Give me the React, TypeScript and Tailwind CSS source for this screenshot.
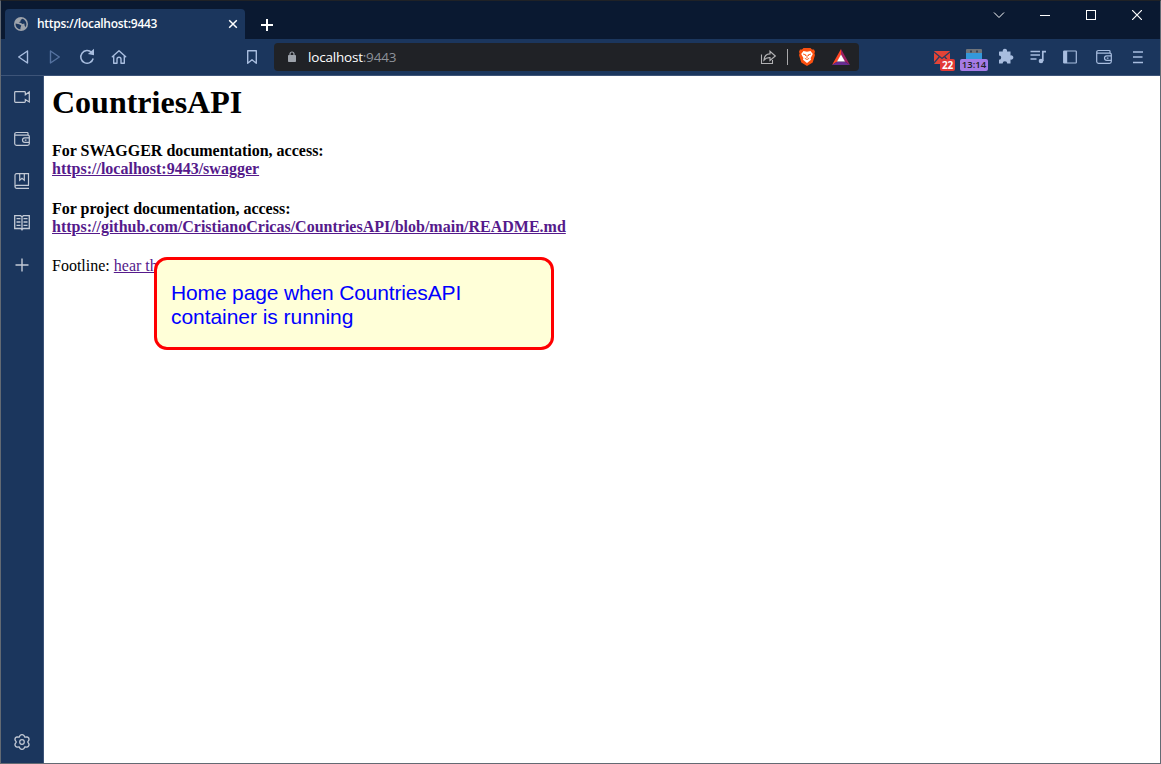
import React from "react";

type IconProps = { children: React.ReactNode; className?: string };

/* 20px icon drawn one unit per pixel, centred in its slot */
function Icon({ children, className = "" }: IconProps) {
  return (
    <svg
      width="20"
      height="20"
      viewBox="0 0 20 20"
      fill="none"
      stroke="currentColor"
      strokeWidth="1.4"
      className={`block shrink-0 ${className}`}
    >
      {children}
    </svg>
  );
}

function Slot({ children, className = "w-8" }: IconProps) {
  return (
    <div className={`relative flex h-9 shrink-0 items-center justify-center ${className}`}>
      {children}
    </div>
  );
}

function SideSlot({ children }: { children: React.ReactNode }) {
  return <div className="flex h-[42px] w-[42px] items-center justify-center">{children}</div>;
}

function TabStrip() {
  return (
    <div className="flex h-[38px] shrink-0 bg-[#0a1931]">
      <div className="ml-1 mt-2 flex h-[30px] w-[240px] items-center rounded-t-[4px] bg-[#1b365d] text-white">
        <svg width="14" height="14" viewBox="0 0 14 14" className="ml-[9px] shrink-0">
          <circle cx="7" cy="7" r="7" fill="#9da3ab" />
          <path
            d="M1.6 6.6 5.2 7.2 7.3 8.6 6.6 10.3 6.3 12.4C3.3 12 1.3 9.700 1.600 6.600ZM8.300 1.700 6.700 3 6.500 4.600 4.700 5.300 6.900 6.100 8.500 7.100 10.300 6.600 10.600 8.500 11.500 10.200C13.400 7.300 12.400 3 8.300 1.700Z"
            fill="#1b365d"
          />
        </svg>
        <span className="ml-[9px] w-[191px] whitespace-nowrap font-['Open_Sans',sans-serif] text-[12px] font-semibold leading-4 tracking-[-0.28px]">
          https://localhost:9443
        </span>
        <svg width="10" height="10" viewBox="0 0 10 10" className="shrink-0" stroke="#fff" strokeWidth="1.5">
          <path d="M1.200 1.200 8.800 8.800M8.800 1.200 1.200 8.800" />
        </svg>
      </div>
      <svg width="12" height="12" viewBox="0 0 12 12" className="ml-4 mt-[9px] shrink-0 self-center">
        <path d="M0 6h12M6 0v12" stroke="#fff" strokeWidth="2" />
      </svg>
      <div className="ml-auto flex h-[28px] items-center text-white">
        <div className="flex w-[46px] justify-center">
          <svg width="12" height="8" viewBox="0 0 12 8" fill="none" stroke="currentColor">
            <path d="M1 1.500 6 6.500 11 1.500" />
          </svg>
        </div>
        <div className="flex w-[46px] justify-center">
          <div className="h-px w-[10px] bg-white" />
        </div>
        <div className="flex w-[46px] justify-center">
          <div className="h-[10px] w-[10px] border border-white" />
        </div>
        <div className="flex w-[46px] justify-center">
          <svg width="10" height="10" viewBox="0 0 10 10" stroke="currentColor" strokeWidth="1.2">
            <path d="M0 0 10 10M10 0 0 10" />
          </svg>
        </div>
      </div>
    </div>
  );
}

function WalletIcon() {
  return (
    <Icon>
      <path
        d="M16 5.700V4.300A0.800 0.800 0 0 0 15.200 3.500H4.500A1.800 1.800 0 0 0 2.700 5.300V14.700A1.800 1.800 0 0 0 4.500 16.300H15.500A1.800 1.800 0 0 0 17.300 14.500V7.500A1.400 1.400 0 0 0 15.900 6.100H4A1.300 1.300 0 0 1 2.700 5"
        strokeWidth="1.200"
      />
      <path d="M17.300 8.800H12.800A2.300 2.300 0 0 0 12.800 13.400H17.300M12.800 11.100H14.500" strokeWidth="1.200" />
    </Icon>
  );
}

function AddressBar() {
  return (
    <div className="ml-[6px] flex h-7 w-[585px] shrink-0 items-center rounded-[4px] bg-[#202226]">
      <svg width="8" height="12" viewBox="0 0 8 12" className="ml-[14px] shrink-0">
        <path d="M2 5V3A2 2 0 0 1 6 3V5" fill="none" stroke="#9da3ab" strokeWidth="1.200" />
        <rect x="0" y="4" width="8" height="7" rx="0.800" fill="#9da3ab" />
      </svg>
      <span className="ml-3 whitespace-nowrap font-['Open_Sans',sans-serif] text-[13.500px] leading-5 tracking-[-0.2px] text-[#8d929a]">
        <span className="text-white">localhost</span>:9443
      </span>
      <div className="ml-auto flex shrink-0 items-center">
        <Icon className="mr-[9px] text-[#b1b1b3]">
          <path d="M3.500 7.500V16.500H14.500V13" strokeWidth="1.100" />
          <path
            d="M6 13C6.300 8.800 8.500 6.800 12 6.800V4.300L17.300 9 12 13.500V10.700C9.500 10.500 7.500 11.200 6 13Z"
            strokeWidth="1.200"
          />
        </Icon>
        <div className="h-4 w-px bg-[#a8a8aa]" />
        <svg width="18" height="20" viewBox="0 0 18 20" className="ml-[10px] shrink-0">
          <path
            d="M5.500 1H12.500L14 2.500 16 2.400 17 4.800 16.400 6.500 17 8 14.700 15.500 9 19 3.300 15.500 1 8 1.600 6.500 1 4.800 2 2.400 4 2.500Z"
            fill="#fb5010"
          />
          <path
            d="M5.500 4 9 4.700 12.500 4 14.800 7 12.600 11 13 12.700 9 16 5 12.700 5.400 11 3.200 7Z"
            fill="#fff"
          />
          <path
            d="M5 7 7.700 7.800 7.300 9M13 7 10.300 7.800 10.700 9M9 8V11M6.800 11.300 9 12.500 11.200 11.300"
            fill="none"
            stroke="#fb5010"
            strokeWidth="0.900"
          />
        </svg>
        <svg width="18" height="16" viewBox="0 0 18 16" className="ml-4 mr-[9px] shrink-0">
          <path d="M9 0 0 16 5.300 12.500 9 6Z" fill="#ff4724" />
          <path d="M9 0 18 16 12.700 12.500 9 6Z" fill="#9e1f63" />
          <path d="M0 16H18L12.700 12.500H5.300Z" fill="#662d91" />
          <path d="M9 5.500 13 12.500H5Z" fill="#fff" />
        </svg>
      </div>
    </div>
  );
}

function Toolbar() {
  return (
    <div className="flex h-9 shrink-0 items-center bg-[#1b365d] pl-[6px] text-[#a8bddf]">
      <Slot>
        <Icon>
          <path d="M5.700 10 14.500 4V16Z" strokeLinejoin="round" />
        </Icon>
      </Slot>
      <Slot>
        <Icon className="text-[#5572a0]">
          <path d="M14.300 10 5.500 4V16Z" strokeLinejoin="round" />
        </Icon>
      </Slot>
      <Slot>
        <Icon>
          <path d="M14.700 5.600A6.300 6.300 0 1 0 16.200 11.500" strokeWidth="1.500" />
          <path d="M12.500 6.500 16.300 3.300V7.300Z" fill="currentColor" />
        </Icon>
      </Slot>
      <Slot>
        <Icon>
          <path
            d="M3.300 9.800 10 3.700 16.700 9.800M4.700 9V16.300H8V12.300A2 2 0 0 1 12 12.300V16.300H15.300V9"
            strokeLinejoin="round"
            strokeLinecap="round"
          />
        </Icon>
      </Slot>
      <Slot className="ml-[101px] w-8">
        <Icon>
          <path d="M5.700 3.700H14.300V16.300L10 12.800 5.700 16.300Z" strokeLinejoin="round" />
        </Icon>
      </Slot>
      <AddressBar />
      <div className="ml-[67px] flex items-center">
        <Slot>
          <svg width="16" height="13" viewBox="0 0 16 13" className="block">
            <rect width="16" height="13" rx="1" fill="#e34437" />
            <path d="M0 1 8 7.500 16 1M0 12 5.500 5.500M16 12 10.500 5.500" fill="none" stroke="#283d61" strokeWidth="1.300" />
          </svg>
          <span className="absolute left-[14px] top-5 flex h-3 w-[15px] items-center justify-center rounded-[2px] bg-[#e23a36] font-['Open_Sans',sans-serif] text-[10px] font-bold leading-3 tracking-[-0.3px] text-white">
            22
          </span>
        </Slot>
        <Slot>
          <svg width="16" height="16" viewBox="0 0 16 16" className="block">
            <rect width="16" height="5" rx="1" fill="#70747a" />
            <path d="M4 1.500h2v2h-2zM10 1.500h2v2h-2z" fill="#3b4354" />
            <rect width="16" height="9" y="4" fill="#3498db" />
          </svg>
          <span className="absolute left-[2px] top-5 flex h-3 w-7 items-center justify-center rounded-[2px] bg-[#a57be6] font-['Open_Sans',sans-serif] text-[9.500px] font-semibold leading-3 text-[#202124]">
            13:14
          </span>
        </Slot>
        <Slot>
          <Icon>
            <path
              d="M3.500 4.500H6.800A2.200 2.200 0 1 1 11 4.500H14.500V8.400A2.200 2.200 0 1 1 14.500 12.600V16.500H11.200A2.300 2.300 0 0 0 6.600 16.500H3V12.800A2.200 2.200 0 0 0 3 8.400V5A0.500 0.500 0 0 1 3.500 4.500Z"
              fill="currentColor"
              stroke="none"
            />
          </Icon>
        </Slot>
        <Slot>
          <Icon>
            <path d="M2.500 4.500H12M2.500 8H12M2.500 12H8.500" strokeWidth="1.500" />
            <path d="M18 4.700H14.800V14" strokeWidth="1.700" />
            <circle cx="13" cy="14" r="2.300" fill="currentColor" stroke="none" />
          </Icon>
        </Slot>
        <Slot>
          <Icon>
            <rect x="3.700" y="4" width="12.600" height="12" rx="0.500" strokeWidth="1.200" />
            <rect x="3.700" y="4" width="3.500" height="12" fill="currentColor" stroke="none" />
          </Icon>
        </Slot>
        <Slot className="ml-px w-[34px]">
          <WalletIcon />
        </Slot>
        <Slot className="w-[34px]">
          <Icon>
            <path d="M5 5H15M5 10H14.500M5 15.500H15" strokeWidth="1.400" />
          </Icon>
        </Slot>
      </div>
    </div>
  );
}

function Sidebar() {
  return (
    <div className="flex w-[43px] shrink-0 flex-col border-r border-[#3d5478] bg-[#1b365d] text-[#c3cad6]">
      <SideSlot>
        <Icon>
          <path
            d="M3.500 4.700H12.500A0.800 0.800 0 0 1 13.300 5.500V7.800L17.300 5V15L13.300 12.500V14.500A0.800 0.800 0 0 1 12.500 15.300H3.500A0.800 0.800 0 0 1 2.700 14.500V5.500A0.800 0.800 0 0 1 3.500 4.700Z"
            strokeWidth="1.200"
          />
        </Icon>
      </SideSlot>
      <SideSlot>
        <WalletIcon />
      </SideSlot>
      <SideSlot>
        <Icon>
          <path
            d="M16.500 14.300V2.700H4.500A1.500 1.500 0 0 0 3 4.200V15.800A1.500 1.500 0 0 0 4.500 17.300H17M4.500 14.300H17M4.500 14.300A1.500 1.500 0 0 0 3 15.800M7.700 3V9.300L10 7.300 12.300 9.300V3"
            strokeWidth="1.200"
          />
        </Icon>
      </SideSlot>
      <SideSlot>
        <Icon>
          <path
            d="M10 4V17.500M2.700 2.700H8.500L10 3.700 11.500 2.700H17.300V15.500H11.500L10 16.500 8.500 15.500H2.700ZM4.500 5.700H8.500M4.500 9H8.500M4.500 12.300H8.500M11.500 5.700H15.500M11.500 9H15.500M11.500 12.300H15.500"
            strokeWidth="1.300"
          />
        </Icon>
      </SideSlot>
      <SideSlot>
        <Icon>
          <path d="M3.500 10H16.500M10 3.500V16.500" strokeWidth="1.400" />
        </Icon>
      </SideSlot>
      <div className="mt-auto">
        <SideSlot>
          <Icon>
            <path
              d="M8 3.500Q10 1.800 12 3.500L12.800 5.200 15 4.800Q17.300 5.500 17 7.800L15.700 10 17 12.200Q17.300 14.500 15 15.200L12.800 14.800 12 16.500Q10 18.200 8 16.500L7.200 14.800 5 15.200Q2.700 14.500 3 12.200L4.300 10 3 7.800Q2.700 5.500 5 4.800L7.200 5.200Z"
              strokeLinejoin="round"
              strokeWidth="1.300"
            />
            <circle cx="10" cy="10" r="2.300" strokeWidth="1.200" />
          </Icon>
        </SideSlot>
      </div>
    </div>
  );
}

function Page() {
  return (
    <main className="relative flex-1 bg-white pl-2 font-['Liberation_Serif',serif] text-[16px] leading-[18px] text-black">
      <h1 className="pt-2 text-[32px] font-bold leading-[36px]">CountriesAPI</h1>
      <div className="mt-[22px] font-bold">
        <p>For SWAGGER documentation, access:</p>
        <a className="text-[#551a8b] underline">https://localhost:9443/swagger</a>
      </div>
      <div className="mt-[22px] font-bold">
        <p>For project documentation, access:</p>
        <a className="text-[#551a8b] underline">
          https://github.com/CristianoCricas/CountriesAPI/blob/main/README.md
        </a>
      </div>
      <p className="mt-[21px] whitespace-nowrap">
        Footline: <a className="text-[#551a8b] underline">hear th</a>
      </p>
      <div className="absolute left-[110px] top-[181px] h-[93px] w-[400px] rounded-[13px] border-[3px] border-[#f00] bg-[#ffffd8] pl-[14px] pt-[21px] font-['Liberation_Sans',sans-serif] text-[21px] leading-6 text-[#00f]">
        <span className="tracking-[-0.15px]">Home page when CountriesAPI</span>
        <br />
        <span className="tracking-[-0.05px]">container is running</span>
      </div>
    </main>
  );
}

export default function App() {
  return (
    <div className="flex h-[764px] w-[1161px] flex-col overflow-hidden border border-[#636a73] border-t-[#202226]">
      <TabStrip />
      <Toolbar />
      <div className="h-px shrink-0 bg-[#3d5478]" />
      <div className="flex min-h-0 flex-1">
        <Sidebar />
        <Page />
      </div>
    </div>
  );
}
